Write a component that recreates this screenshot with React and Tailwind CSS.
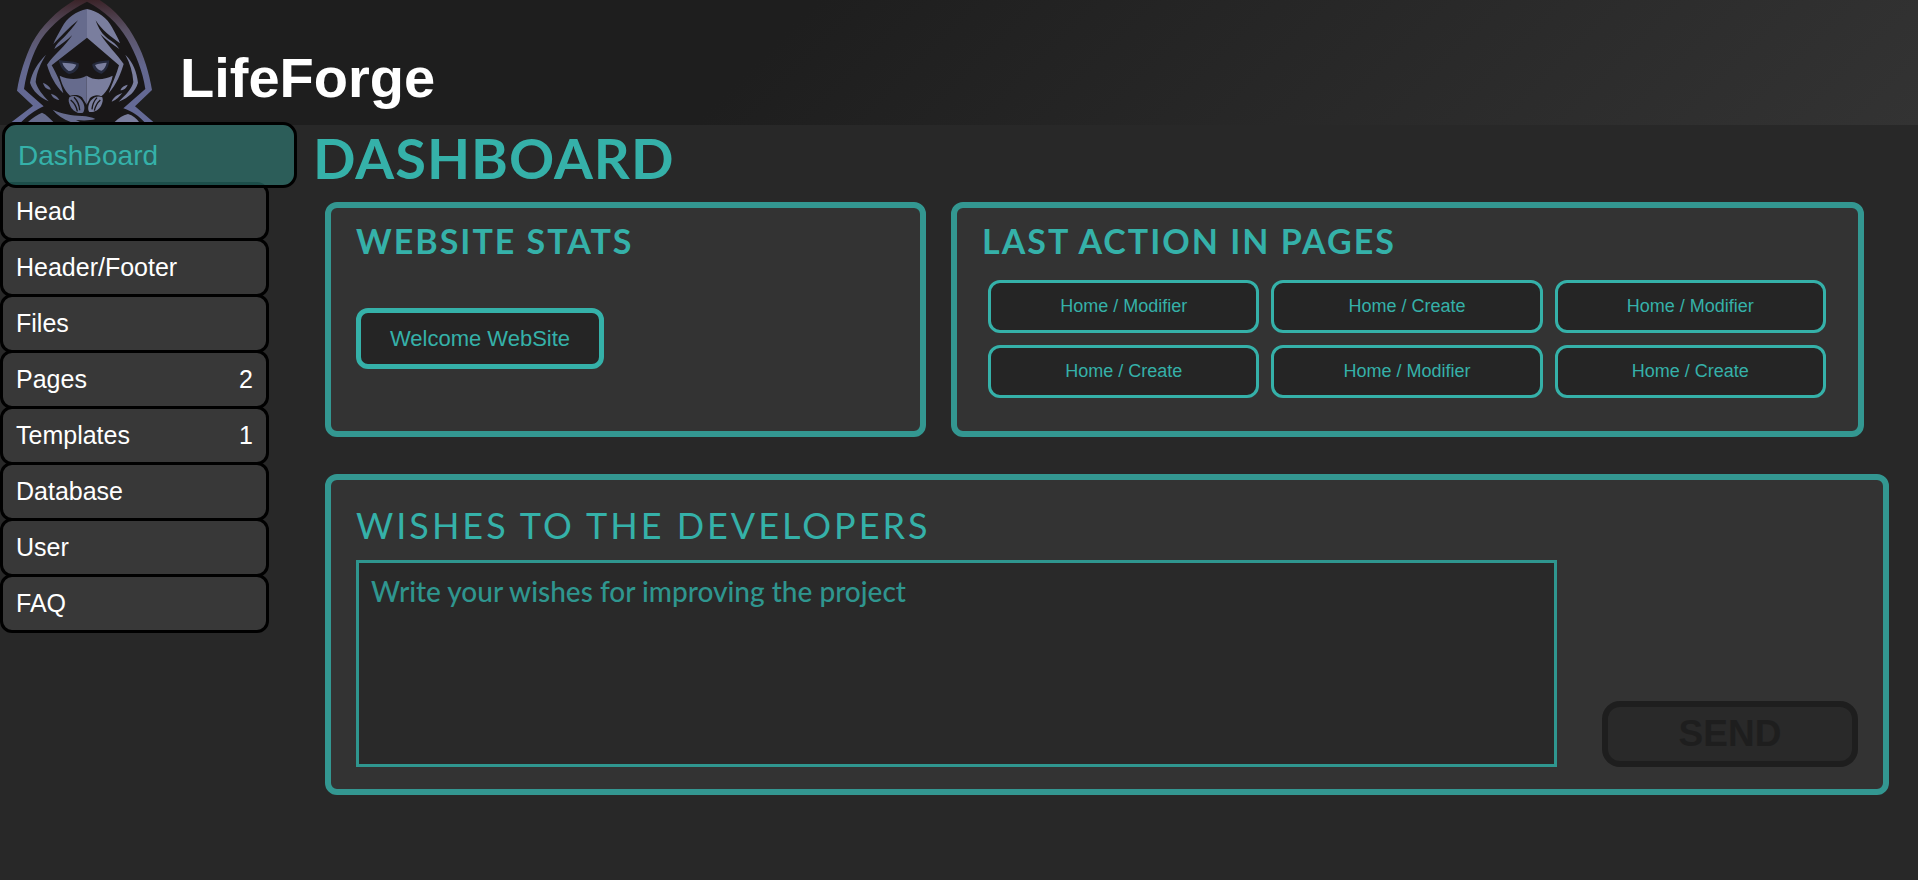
const navItems = [
  { label: 'DashBoard', active: true },
  { label: 'Head' },
  { label: 'Header/Footer' },
  { label: 'Files' },
  { label: 'Pages', count: 2 },
  { label: 'Templates', count: 1 },
  { label: 'Database' },
  { label: 'User' },
  { label: 'FAQ' },
];

const actions = [
  'Home / Modifier',
  'Home / Create',
  'Home / Modifier',
  'Home / Create',
  'Home / Modifier',
  'Home / Create',
];

const card = 'rounded-xl border-6 border-[#339791] bg-[#333333]';
const cardHeading = "font-['Lato',sans-serif] text-[34px] leading-[42px] font-bold tracking-[2px] uppercase";

function Logo() {
  return (
    <svg viewBox="0 0 540 366" className="h-[122px] w-[180px] shrink-0" role="img" aria-label="LifeForge logo">
      <defs>
        <linearGradient id="rim" x1="0" y1="0" x2="0" y2="1">
          <stop offset="0" stopColor="#3b2429" />
          <stop offset="0.25" stopColor="#5a5266" />
          <stop offset="0.55" stopColor="#63678f" />
          <stop offset="1" stopColor="#656b98" />
        </linearGradient>
      </defs>
      <path d="M35 366L99 317L51 272C60 218 76 172 96 130C124 78 168 34 224 0H299C346 30 384 74 410 126C432 168 448 220 456 270L405 319L460 366Z" fill="url(#rim)" />
      <path d="M64 366C82 348 106 330 131 319L72 267C80 214 98 160 122 120C156 70 204 34 261 5C314 32 354 70 382 118C408 164 428 214 436 267L370 325C398 334 418 350 433 366Z" fill="#191718" />
      <path d="M261 27C228 33 200 54 186 82C176 101 166 117 160 132C184 108 205 84 234 61C220 82 204 99 192 112C178 124 168 134 163 147C182 134 202 120 217 105C196 138 164 162 141 194C150 226 166 256 190 280C184 252 170 222 155 196L261 113Z" fill="#666b8d" />
      <path d="M261 27C294 33 322 54 336 82C346 101 356 117 360 130C336 112 304 90 287 61C296 88 308 104 324 116C338 124 350 134 358 147C338 134 318 120 301 103C322 136 350 162 371 192C362 222 350 252 326 280C338 248 350 222 357 196L261 113Z" fill="#7a7e9e" />
      <path d="M138 164C114 188 96 216 90 248C99 274 119 292 146 304C129 286 112 266 107 246C110 216 122 190 138 164Z" fill="#666b8d" />
      <path d="M376 164C400 188 410 216 414 248C406 274 388 292 356 305C376 286 396 266 400 246C398 216 390 190 376 164Z" fill="#7a7e9e" />
      <path d="M129 248C133 262 140 268 153 269C148 258 140 253 129 248ZM153 281C157 292 164 297 178 300C172 289 164 285 153 281Z" fill="#666b8d" />
      <path d="M383 254C378 266 371 270 361 271C366 260 373 256 383 254ZM367 279C358 290 350 299 335 305C340 292 352 284 367 279Z" fill="#7a7e9e" />
      <path d="M176 180C196 184 216 182 236 190C240 204 226 220 207 222C190 214 180 200 176 180ZM328 181C310 183 292 184 277 192C276 204 288 218 305 221C320 213 326 200 328 181Z" fill="#252a3d" />
      <path d="M187 188C200 189 216 188 229 194C224 206 216 213 206 213C196 206 190 198 187 188Z" fill="#777d9e" />
      <path d="M320 188C308 189 296 190 285 195C290 206 297 212 305 212C314 206 318 198 320 188Z" fill="#7a7e9e" />
      <path d="M179 227C208 240 234 240 260 227V314L246 292C236 284 224 284 210 287C192 270 184 248 179 227Z" fill="#666b8d" />
      <path d="M338 227C312 240 282 242 260 227V314L270 294C282 284 294 284 304 289C324 272 334 248 338 227Z" fill="#7a7e9e" />
      <path d="M208 292C220 284 238 290 246 302C254 314 256 328 249 338C234 342 220 334 212 320C206 308 204 300 208 292Z" fill="#666b8d" />
      <path d="M307 292C296 286 282 290 272 302C264 314 262 328 268 336C282 338 296 330 303 318C308 308 310 300 307 292Z" fill="#7a7e9e" />
      <path d="M212 300C222 308 229 318 232 334M222 292C232 302 238 314 239 331M301 300C292 308 286 318 283 332M291 293C282 303 277 314 276 328" fill="none" stroke="#191718" strokeWidth="4" />
      <path d="M158 329C186 342 214 346 246 348C262 349 276 352 286 357C270 362 250 362 228 360L240 366H212C190 358 172 346 158 329Z" fill="#666b8d" />
      <path d="M84 366C96 354 112 344 126 338C140 344 150 356 160 366Z" fill="#666b8d" />
      <path d="M344 366C356 354 368 346 384 342C398 346 410 356 417 366Z" fill="#7a7e9e" />
    </svg>
  );
}

function NavItem({ label, count, active }) {
  if (active) {
    return (
      <a
        href="#dashboard"
        aria-current="page"
        className="relative z-10 -mt-[3px] -mr-7 -mb-[3px] ml-[2px] flex h-[66px] items-center rounded-[14px] border-3 border-black bg-[#2f8079]/60 pt-[2px] pl-[13px] text-[28px] leading-8 text-[#35b1a9]"
      >
        {label}
      </a>
    );
  }
  return (
    <a
      href={`#${label.toLowerCase()}`}
      className="-mt-[3px] flex h-[59px] items-center justify-between rounded-xl border-3 border-black bg-[#383838] px-[13px] text-[25px] text-white"
    >
      <span>{label}</span>
      {count && <span>{count}</span>}
    </a>
  );
}

export default function App() {
  return (
    <div className="min-h-screen bg-[#282828] font-['Liberation_Sans',Arial,sans-serif] text-[#35b1a9]">
      <header className="flex h-[125px] bg-[linear-gradient(135deg,#1e1e1e_40%,#333333)]">
        <Logo />
        <h1 className="mt-[46px] text-[56px] leading-[64px] font-bold text-white">LifeForge</h1>
      </header>

      <div className="flex">
        <nav className="flex w-[269px] shrink-0 flex-col">
          {navItems.map((item) => (
            <NavItem key={item.label} {...item} />
          ))}
        </nav>

        <main className="min-w-0 flex-1 pr-[29px] pl-14">
          <h2 className="-ml-3 pt-px font-['Lato',sans-serif] text-[56px] leading-[64px] font-bold tracking-[1px] uppercase">
            Dashboard
          </h2>

          <div className="mt-3 mr-[25px] grid grid-cols-[601fr_913fr] gap-[25px]">
            <section className={`${card} px-[25px] pt-3 pb-[62px]`}>
              <h3 className={cardHeading}>Website stats</h3>
              <button
                type="button"
                className="mt-[46px] h-[61px] w-[248px] rounded-xl border-5 border-[#35b1a9] bg-[#252525] text-[22px]"
              >
                Welcome WebSite
              </button>
            </section>

            <section className={`${card} px-[25px] pt-3`}>
              <h3 className={cardHeading}>Last action in pages</h3>
              <div className="mt-[18px] mr-[7px] ml-[6px] grid grid-cols-3 gap-3">
                {actions.map((text, i) => (
                  <button
                    key={i}
                    type="button"
                    className="h-[53px] rounded-xl border-3 border-[#35b1a9] bg-[#252525] text-[18px]"
                  >
                    {text}
                  </button>
                ))}
              </div>
            </section>
          </div>

          <form className={`${card} mt-[37px] px-[25px] pt-[21px] pb-[22px]`}>
            <label
              htmlFor="wishes"
              className="block font-['Lato',sans-serif] text-[36px] leading-[48px] tracking-[3px] uppercase"
            >
              Wishes to the developers
            </label>
            <div className="mt-[11px] flex items-end gap-[45px]">
              <textarea
                id="wishes"
                placeholder="Write your wishes for improving the project"
                className="block h-[207px] min-w-0 flex-1 resize-none border-3 border-[#2f968f] bg-[#292929] px-3 py-[11px] font-['Lato',sans-serif] text-[28px] leading-[34px] font-medium outline-none placeholder:text-[#2f968f]"
              />
              <button
                type="button"
                disabled
                className="h-[66px] w-64 rounded-[18px] border-6 border-[#1e1e1e] bg-[#292929] pb-[2px] text-[37px] leading-none font-bold text-[#1e1e1e]"
              >
                SEND
              </button>
            </div>
          </form>
        </main>
      </div>
    </div>
  );
}
